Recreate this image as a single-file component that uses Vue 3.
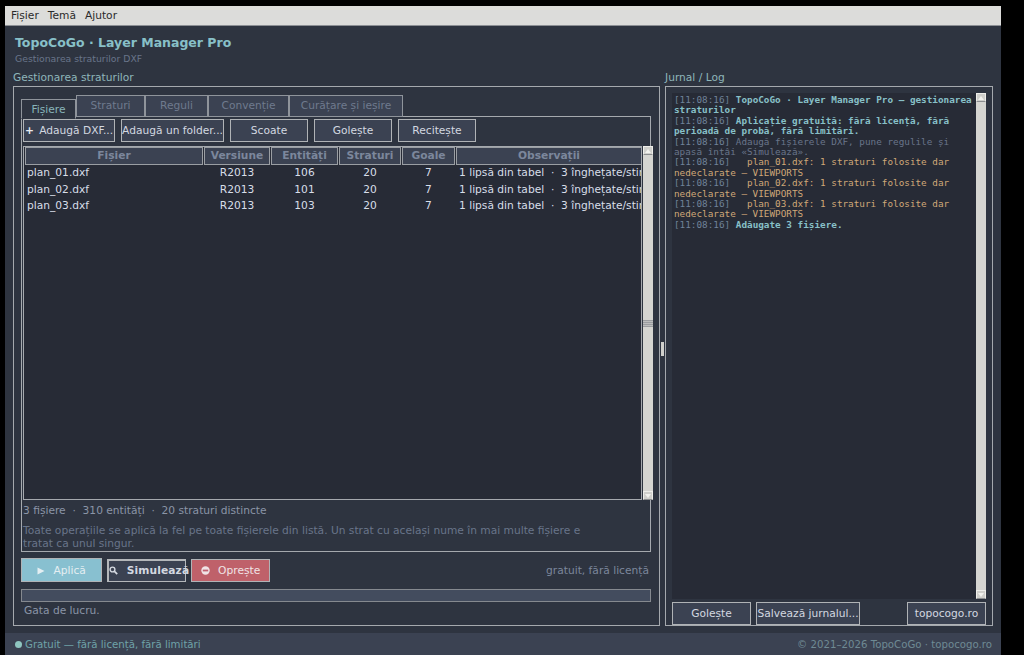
<template>
  <div class="screen">
    <div class="window">
      <nav class="menubar">
        <span v-for="m in menus" :key="m">{{ m }}</span>
      </nav>
      <header class="head">
        <h1>TopoCoGo · Layer Manager Pro</h1>
        <p>Gestionarea straturilor DXF</p>
      </header>
      <main class="panes">
        <section class="left">
          <div class="legend">Gestionarea straturilor</div>
          <div class="group left-group">
            <div class="tabs">
              <div
                v-for="(t, i) in tabs"
                :key="t.name"
                class="tab"
                :class="{ active: i === 0 }"
                :style="{ width: t.w + 'px' }"
              >{{ t.name }}</div>
            </div>
            <div class="tab-pane">
              <div class="toolbar">
                <button class="btn add"><b>+</b> Adaugă DXF...</button>
                <button class="btn folder">Adaugă un folder...</button>
                <button class="btn wide">Scoate</button>
                <button class="btn wide">Golește</button>
                <button class="btn wide">Recitește</button>
              </div>
              <div class="table">
                <div class="grid">
                  <div class="thead">
                    <div v-for="c in cols" :key="c" class="th">{{ c }}</div>
                  </div>
                  <div v-for="f in files" :key="f.name" class="tr">
                    <div class="td name">{{ f.name }}</div>
                    <div class="td">R2013</div>
                    <div class="td">{{ f.ent }}</div>
                    <div class="td">20</div>
                    <div class="td">7</div>
                    <div class="td note">1 lipsă din tabel &nbsp;·&nbsp; 3 înghețate/stinse/</div>
                  </div>
                </div>
                <div class="vscroll">
                  <div class="arrow up"><i></i></div>
                  <div class="track"><div class="grip"></div></div>
                  <div class="arrow down"><i></i></div>
                </div>
              </div>
              <div class="stats">3 fișiere &nbsp;·&nbsp; 310 entități &nbsp;·&nbsp; 20 straturi distincte</div>
              <div class="hint">Toate operațiile se aplică la fel pe toate fișierele din listă. Un strat cu același nume în mai multe fișiere e<br>tratat ca unul singur.</div>
            </div>
            <div class="actions">
              <button class="btn apply">
                <svg width="8" height="8" viewBox="0 0 8 8"><path d="M0.5 0.5L7.5 4L0.5 7.5Z" fill="#e4eef2"/></svg>
                Aplică
              </button>
              <button class="btn simulate">
                <svg width="9" height="9" viewBox="0 0 9 9"><circle cx="3.5" cy="3.5" r="2.4" fill="none" stroke="#d5d9e0" stroke-width="1.4"/><path d="M5.2 5.2L8.2 8.2" stroke="#d5d9e0" stroke-width="1.7"/></svg>
                Simulează
              </button>
              <button class="btn stop">
                <svg width="9" height="9" viewBox="0 0 9 9"><circle cx="4.5" cy="4.5" r="4.2" fill="#f0e4e6"/><rect x="1.8" y="3.6" width="5.4" height="1.8" fill="#bf6170"/></svg>
                Oprește
              </button>
              <span class="free">gratuit, fără licență</span>
            </div>
            <div class="progress"></div>
            <div class="status">Gata de lucru.</div>
          </div>
        </section>
        <div class="splitter"><i></i></div>
        <section class="right">
          <div class="legend">Jurnal / Log</div>
          <div class="group right-group">
            <div class="log-box">
              <div class="log">
                <div v-for="(l, i) in log" :key="i" :class="l.kind"><span class="time">[11:08:16]</span> {{ l.text }}</div>
              </div>
              <div class="vscroll">
                <div class="arrow up"><i></i></div>
                <div class="track"></div>
                <div class="arrow down"><i></i></div>
              </div>
            </div>
            <div class="log-actions">
              <button class="btn log-btn">Golește</button>
              <button class="btn save">Salvează jurnalul...</button>
              <span class="spacer"></span>
              <button class="btn log-btn">topocogo.ro</button>
            </div>
          </div>
        </section>
      </main>
      <footer class="foot">
        <span class="lic"><i class="dot"></i>Gratuit — fără licență, fără limitări</span>
        <span class="copy">© 2021–2026 TopoCoGo · topocogo.ro</span>
      </footer>
    </div>
  </div>
</template>

<script setup>
const menus = ['Fișier', 'Temă', 'Ajutor']

const tabs = [
  { name: 'Fișiere', w: 55 },
  { name: 'Straturi', w: 69 },
  { name: 'Reguli', w: 63 },
  { name: 'Convenție', w: 81 },
  { name: 'Curățare și ieșire', w: 114 }
]

const cols = ['Fișier', 'Versiune', 'Entități', 'Straturi', 'Goale', 'Observații']

const files = [
  { name: 'plan_01.dxf', ent: 106 },
  { name: 'plan_02.dxf', ent: 101 },
  { name: 'plan_03.dxf', ent: 103 }
]

const log = [
  { kind: 'accent', text: 'TopoCoGo · Layer Manager Pro — gestionarea straturilor' },
  { kind: 'accent', text: 'Aplicație gratuită: fără licență, fără perioadă de probă, fără limitări.' },
  { kind: 'muted', text: 'Adaugă fișierele DXF, pune regulile și apasă întâi «Simulează».' },
  { kind: 'warn', text: '  plan_01.dxf: 1 straturi folosite dar nedeclarate — VIEWPORTS' },
  { kind: 'warn', text: '  plan_02.dxf: 1 straturi folosite dar nedeclarate — VIEWPORTS' },
  { kind: 'warn', text: '  plan_03.dxf: 1 straturi folosite dar nedeclarate — VIEWPORTS' },
  { kind: 'accent', text: 'Adăugate 3 fișiere.' }
]
</script>

<style>
html, body {
  margin: 0;
  background: #000;
}
</style>

<style scoped>
.screen {
  width: 1024px;
  height: 655px;
  box-sizing: border-box;
  padding: 6px 23px 0 5px;
  background: #000;
  overflow: hidden;
  font-family: "DejaVu Sans", sans-serif;
  font-size: 10.67px;
}
.window {
  height: 649px;
  display: flex;
  flex-direction: column;
  background: #2e3440;
}
.menubar {
  height: 20px;
  flex: none;
  display: flex;
  align-items: center;
  gap: 9px;
  padding-left: 6px;
  background: #dcdcda;
  color: #2a2a2a;
  border-bottom: 1px solid #8c8f94;
  box-sizing: border-box;
}
.head {
  flex: none;
  height: 45px;
  box-sizing: border-box;
  padding: 9px 10px 0;
}
.head h1 {
  margin: 0;
  font-size: 12.5px;
  line-height: 15px;
  font-weight: 700;
  color: #88c0c8;
}
.head p {
  margin: 3px 0 0;
  font-size: 9.3px;
  line-height: 12px;
  color: #69758a;
}
.panes {
  flex: 1;
  min-height: 0;
  display: flex;
  padding: 0 8px 7px;
}
.left {
  width: 647px;
  flex: none;
  display: flex;
  flex-direction: column;
}
.right {
  flex: 1;
  min-width: 0;
  display: flex;
  flex-direction: column;
}
.splitter {
  width: 5px;
  flex: none;
  display: flex;
  align-items: center;
  justify-content: center;
}
.splitter i {
  width: 3px;
  height: 14px;
  background: #d0d0cc;
}
.legend {
  height: 15px;
  line-height: 14px;
  color: #8fb6ba;
  flex: none;
}
.group {
  flex: 1;
  min-height: 0;
  box-sizing: border-box;
  border: 1px solid #a5a9ae;
  display: flex;
  flex-direction: column;
}
.left-group {
  padding: 12px 8px 0 7px;
}
.right-group {
  padding: 6px 6px 0 6px;
}
.tabs {
  display: flex;
  align-items: flex-start;
  gap: 0;
  flex: none;
  height: 18px;
  position: relative;
  z-index: 1;
  margin-bottom: -1px;
}
.tab {
  box-sizing: border-box;
  height: 22px;
  line-height: 20px;
  text-align: center;
  background: #3b4252;
  color: #6f7a8e;
  border: 1px solid #8f949b;
  border-bottom: 1px solid #8f949b;
  margin-top: -4px;
}
.tab.active {
  height: 20px;
  margin-top: 0;
  line-height: 20px;
  background: #2e3440;
  color: #88b4ba;
  border-bottom: 1px solid #2e3440;
}
.tab-pane {
  flex: none;
  height: 436px;
  box-sizing: border-box;
  border: 1px solid #a5a9ae;
  padding: 2px 1px 0;
  display: flex;
  flex-direction: column;
}
.toolbar {
  display: flex;
  gap: 6px;
  flex: none;
  margin-bottom: 4px;
}
.btn {
  box-sizing: border-box;
  height: 23px;
  padding: 0;
  background: #3b4252;
  border: 1px solid #b0b3b6;
  color: #d3d8e0;
  font: inherit;
  text-align: center;
  white-space: nowrap;
}
.add { width: 92px; }
.add b { margin-right: 2px; color: #e8ebef; }
.folder { width: 103px; }
.wide { width: 78px; }
.table {
  flex: none;
  height: 354px;
  display: flex;
  gap: 1px;
}
.grid {
  flex: none;
  width: 619px;
  box-sizing: border-box;
  border: 1px solid #a5a9ae;
  background: #272b36;
  padding: 0 0 0 1px;
  margin-right: 0;
  overflow: hidden;
}
.thead, .tr {
  display: grid;
  grid-template-columns: 178px 66px 67px 62px 53px 186px;
  column-gap: 1px;
}
.thead {
  height: 18px;
}
.th {
  box-sizing: border-box;
  height: 18px;
  line-height: 16px;
  background: #3b4252;
  border: 1px solid #9a9ea3;
  color: #7c879c;
  font-weight: 700;
  text-align: center;
}
.tr {
  height: 16.5px;
  line-height: 16.5px;
  color: #d8dee9;
  white-space: nowrap;
}
.td {
  text-align: center;
  overflow: hidden;
}
.td.name {
  text-align: left;
  padding-left: 2px;
}
.td.note {
  text-align: left;
  padding-left: 3px;
}
.vscroll {
  width: 10px;
  flex: none;
  display: flex;
  flex-direction: column;
  background: #d5d5d1;
}
.arrow {
  height: 9px;
  flex: none;
  background: #cfcfcb;
  border: 1px solid #eeeeea;
  border-bottom-color: #8b8d8f;
  box-sizing: border-box;
  display: flex;
  align-items: center;
  justify-content: center;
}
.arrow i {
  width: 0;
  height: 0;
  border-left: 3px solid transparent;
  border-right: 3px solid transparent;
}
.arrow.up i { border-bottom: 4px solid #f2f2ee; }
.arrow.down i { border-top: 4px solid #f2f2ee; }
.track {
  flex: 1;
  display: flex;
  align-items: center;
  background: #d5d5d1;
}
.grip {
  width: 100%;
  height: 7px;
  background: repeating-linear-gradient(#9b9da0 0 1px, #bcbdbd 1px 2px);
}
.stats {
  flex: none;
  height: 22px;
  line-height: 22px;
  color: #8b95a7;
}
.hint {
  flex: none;
  line-height: 13px;
  margin-top: 2px;
  color: #69758a;
}
.actions {
  flex: none;
  display: flex;
  align-items: center;
  gap: 5px;
  height: 24px;
  margin-top: 6px;
}
.actions svg { margin-right: 5px; vertical-align: -1px; }
.apply {
  width: 81px;
  height: 24px;
  background: #88c0d0;
  color: #e4eef2;
}
.simulate {
  width: 79px;
  height: 23px;
  border-width: 2px 1px 1px 2px;
  border-color: #b4b7ba;
  font-weight: 600;
  letter-spacing: 0.1px;
}
.stop {
  width: 79px;
  background: #bf616a;
  color: #f0e4e6;
  height: 23px;
}
.free {
  margin-left: auto;
  margin-right: 2px;
  color: #7c879c;
}
.progress {
  flex: none;
  height: 13px;
  box-sizing: border-box;
  margin-top: 7px;
  border: 1px solid #85898f;
  background: #434c5e;
}
.status {
  flex: none;
  margin-top: 2px;
  line-height: 13px;
  padding-left: 3px;
  color: #8b95a7;
}
.log-box {
  flex: 1;
  min-height: 0;
  display: flex;
  background: #272b36;
}
.log {
  flex: 1;
  min-width: 0;
  padding: 2px 2px 0 2px;
  font-family: "DejaVu Sans Mono", monospace;
  font-size: 9.33px;
  line-height: 10.4px;
  white-space: pre-wrap;
  color: #d8dee9;
}
.log .time { color: #6f8299; font-weight: 400; }
.accent { color: #88c0c8; font-weight: 700; }
.muted { color: #69758a; }
.warn { color: #d0a878; }
.log-actions {
  flex: none;
  display: flex;
  gap: 5px;
  margin-top: 3px;
}
.log-btn { width: 79px; }
.save { width: 104px; }
.spacer { flex: 1; }
.foot {
  flex: none;
  height: 22px;
  box-sizing: border-box;
  padding: 0 9px 0 10px;
  display: flex;
  align-items: center;
  justify-content: space-between;
  background: #3b4252;
  font-size: 10.2px;
  color: #6fa2a8;
}
.lic { display: flex; align-items: center; }
.dot {
  width: 7px;
  height: 7px;
  border-radius: 50%;
  background: #8fc6c0;
  margin-right: 3px;
}
.copy { color: #6f8a94; }
</style>
